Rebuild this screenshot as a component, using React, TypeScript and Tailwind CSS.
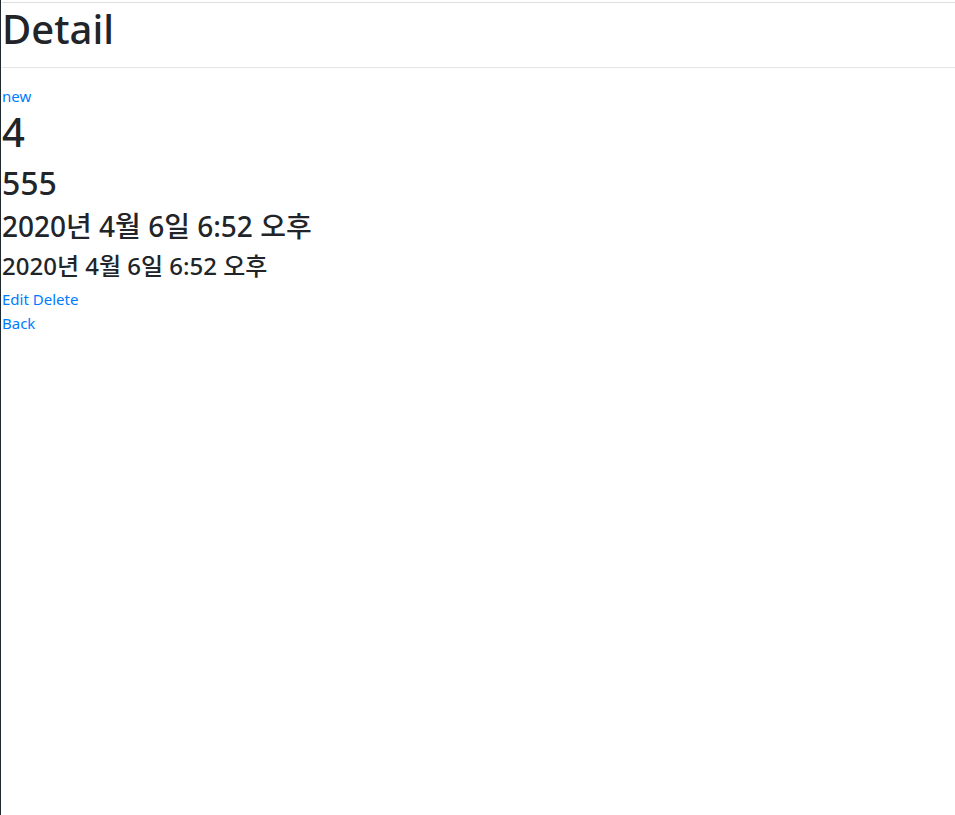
export default function App() {
  return (
    <div className="min-h-screen border-l border-[#1f2a30] bg-white pt-[2px] pl-px font-['Noto_Sans','Noto_Sans_CJK_KR',sans-serif] text-[15px] leading-6 text-[#212529]">
      <div className="border-t border-[#dedede]">
        <h1 className="mb-2 pt-[3px] text-[40px] leading-[45px] font-medium">Detail</h1>
        <hr className="my-4 border-t border-black/10" />
        <div>
          <a href="#" className="text-[#007bff]">
            new
          </a>
        </div>
        <h1 className="mb-2 text-[40px] leading-[48px] font-medium">4</h1>
        <h2 className="mb-2 text-[32px] leading-[38.4px] font-medium">555</h2>
        <h3 className="mb-2 text-[28px] leading-[33.6px] font-medium">
          2020년 4월 6일 6:52 오후
        </h3>
        <h4 className="mb-1.5 text-[24px] leading-[28.8px] font-medium">
          2020년 4월 6일 6:52 오후
        </h4>
        <div>
          <a href="#" className="text-[#007bff]">
            Edit
          </a>{" "}
          <a href="#" className="text-[#007bff]">
            Delete
          </a>
        </div>
        <div>
          <a href="#" className="text-[#007bff]">
            Back
          </a>
        </div>
      </div>
    </div>
  );
}
